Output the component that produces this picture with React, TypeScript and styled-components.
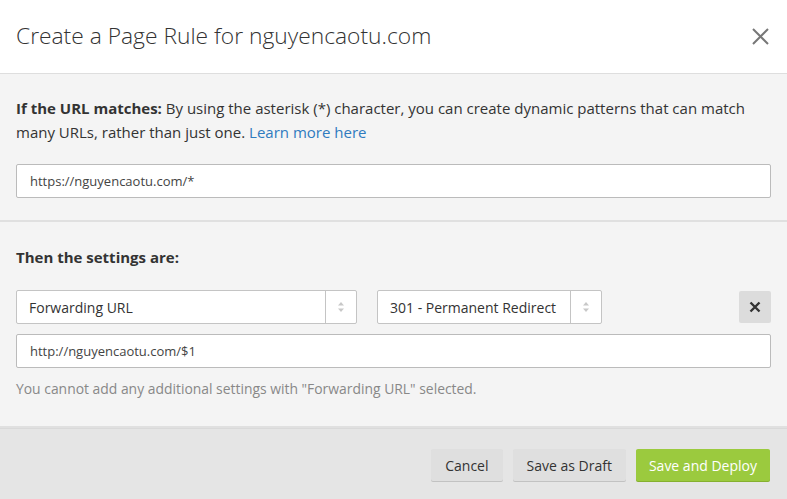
import styled, { createGlobalStyle } from "styled-components";

const GlobalStyle = createGlobalStyle`
  html, body {
    margin: 0;
    padding: 0;
    background: #fff;
    font-family: "Open Sans", "Liberation Sans", sans-serif;
  }
  * { box-sizing: border-box; }
`;

const Modal = styled.div`
  width: 787px;
  height: 499px;
  display: flex;
  flex-direction: column;
  background: #f4f4f4;
  overflow: hidden;
`;

const Header = styled.div`
  height: 74px;
  display: flex;
  align-items: center;
  justify-content: space-between;
  padding: 0 17px 0 16px;
  background: #fff;
  border-bottom: 1px solid #dedede;
`;

const Title = styled.h1`
  margin: 0 0 2px;
  font-size: 22.8px;
  font-weight: 300;
  color: #333;
`;

const CloseButton = styled.button`
  border: 0;
  background: none;
  padding: 0;
  width: 20px;
  height: 20px;
  display: flex;
  align-items: center;
  justify-content: center;
  cursor: pointer;
`;

const Section = styled.div<{ $height: number }>`
  height: ${(p) => p.$height}px;
  padding: 22px 16px 0;
  border-bottom: 2px solid #e0e0e0;
`;

const Paragraph = styled.p`
  margin: 0 0 20px;
  font-size: 15px;
  line-height: 24px;
  color: #333;
`;

const Link = styled.a`
  color: #2f7bbf;
  text-decoration: none;
`;

const Heading = styled.div`
  margin: 1px 0 21px;
  font-size: 15px;
  font-weight: 700;
  line-height: 24px;
  color: #333;
`;

const TextInput = styled.div`
  height: 34px;
  display: flex;
  align-items: center;
  padding: 0 13px;
  background: #fff;
  border: 1px solid #bbb;
  border-radius: 2px;
  font-size: 13px;
  color: #444;
`;

const SelectRow = styled.div`
  display: flex;
  align-items: center;
  gap: 20px;
  margin-bottom: 10px;
`;

const Select = styled.div<{ $width: number }>`
  width: ${(p) => p.$width}px;
  height: 34px;
  display: flex;
  background: #fff;
  border: 1px solid #c4c4c4;
  border-radius: 2px;
`;

const SelectValue = styled.div`
  flex: 1;
  display: flex;
  align-items: center;
  padding: 0 12px;
  font-size: 14px;
  color: #333;
`;

const SelectArrows = styled.div`
  width: 31px;
  border-left: 1px solid #c4c4c4;
  display: flex;
  align-items: center;
  justify-content: center;
`;

const RemoveButton = styled.button`
  margin-left: auto;
  width: 32px;
  height: 32px;
  border: 0;
  border-radius: 2px;
  background: #dcdcdc;
  display: flex;
  align-items: center;
  justify-content: center;
  padding: 0;
`;

const Hint = styled.div`
  margin-top: 11px;
  font-size: 13.9px;
  line-height: 20px;
  color: #888;
`;

const Footer = styled.div`
  flex: 1;
  display: flex;
  justify-content: flex-end;
  align-items: flex-start;
  gap: 10px;
  padding: 20px 17px 0 0;
  background: #e5e5e5;
  border-top: 1px solid #d9d9d9;
`;

const Button = styled.button<{ $primary?: boolean }>`
  height: 32px;
  padding: 0 ${(p) => (p.$primary ? 13 : 14)}px;
  border: 0;
  border-radius: 2px;
  font-family: inherit;
  font-size: 14px;
  color: ${(p) => (p.$primary ? "#fff" : "#333")};
  background: ${(p) => (p.$primary ? "#9bca3e" : "#dfdfdf")};
  box-shadow: 0 1px 0 ${(p) => (p.$primary ? "#86b02f" : "#c2c2c2")};
  cursor: pointer;
`;

function Arrows() {
  return (
    <svg width="8" height="12" viewBox="0 0 8 12">
      <path d="M4 1 L7 4.5 L1 4.5 Z" fill="#c8c8c8" />
      <path d="M4 11 L7 7.5 L1 7.5 Z" fill="#c8c8c8" />
    </svg>
  );
}

export default function App() {
  return (
    <Modal>
      <GlobalStyle />
      <Header>
        <Title>Create a Page Rule for nguyencaotu.com</Title>
        <CloseButton aria-label="Close">
          <svg width="17" height="17" viewBox="0 0 17 17">
            <path d="M1 1 L16 16 M16 1 L1 16" stroke="#777" strokeWidth="2" />
          </svg>
        </CloseButton>
      </Header>
      <Section $height={148}>
        <Paragraph>
          <b>If the URL matches:</b> By using the asterisk (*) character, you can create dynamic
          patterns that can match many URLs, rather than just one. <Link href="#">Learn more here</Link>
        </Paragraph>
        <TextInput>https://nguyencaotu.com/*</TextInput>
      </Section>
      <Section $height={206}>
        <Heading>Then the settings are:</Heading>
        <SelectRow>
          <Select $width={341}>
            <SelectValue>Forwarding URL</SelectValue>
            <SelectArrows>
              <Arrows />
            </SelectArrows>
          </Select>
          <Select $width={225}>
            <SelectValue>301 - Permanent Redirect</SelectValue>
            <SelectArrows>
              <Arrows />
            </SelectArrows>
          </Select>
          <RemoveButton aria-label="Remove">
            <svg width="12" height="12" viewBox="0 0 12 12">
              <path d="M1.5 1.5 L10.5 10.5 M10.5 1.5 L1.5 10.5" stroke="#333" strokeWidth="2.4" />
            </svg>
          </RemoveButton>
        </SelectRow>
        <TextInput>http://nguyencaotu.com/$1</TextInput>
        <Hint>You cannot add any additional settings with "Forwarding URL" selected.</Hint>
      </Section>
      <Footer>
        <Button>Cancel</Button>
        <Button>Save as Draft</Button>
        <Button $primary>Save and Deploy</Button>
      </Footer>
    </Modal>
  );
}
